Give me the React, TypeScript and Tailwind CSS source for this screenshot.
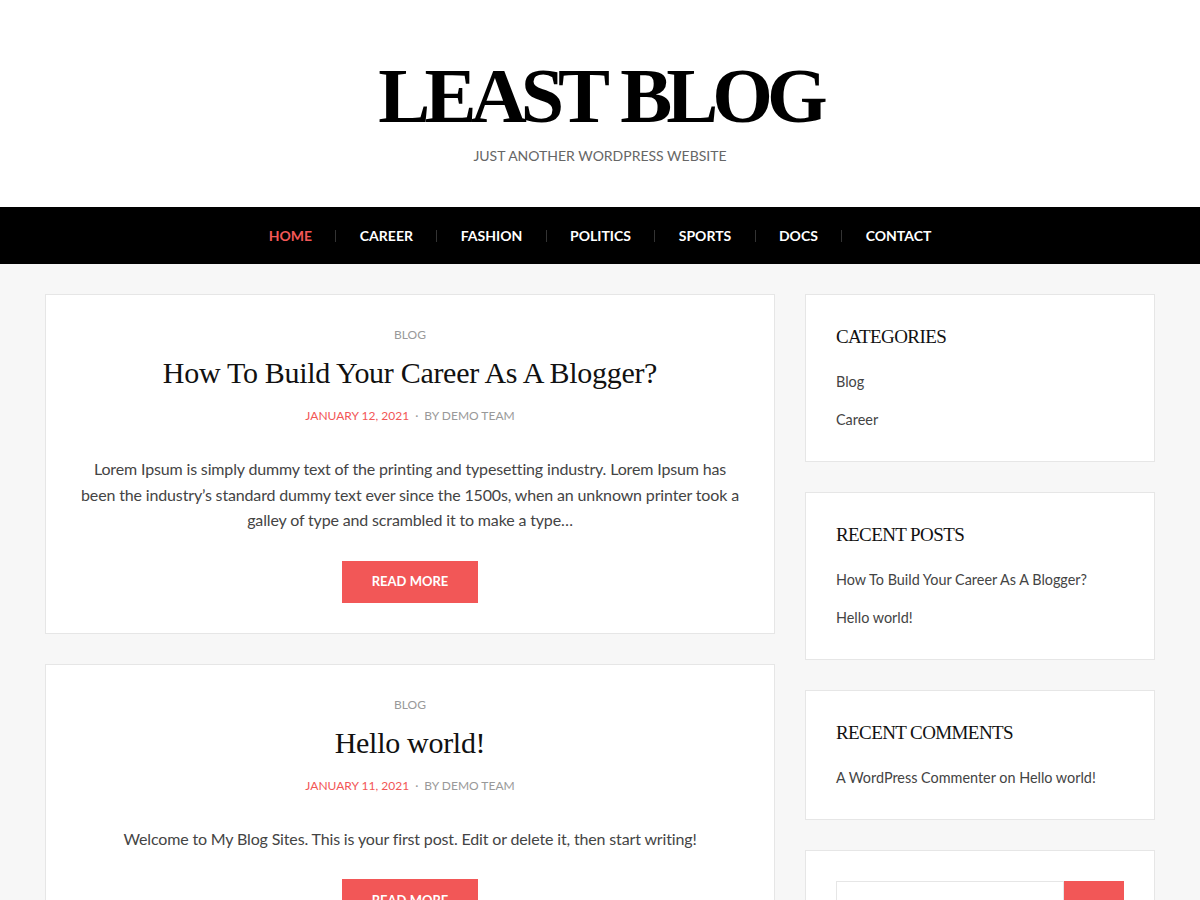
import React from "react";

const serif = { fontFamily: '"Liberation Serif", "Times New Roman", serif' };

const navItems = ["HOME", "CAREER", "FASHION", "POLITICS", "SPORTS", "DOCS", "CONTACT"];

function Post({
  title,
  date,
  children,
}: {
  title: string;
  date: string;
  children: React.ReactNode;
}) {
  return (
    <article className="bg-white border border-[#e6e6e6] px-[35px] pt-[31px] pb-[30px] flex flex-col items-center text-center">
      <a className="text-[12px] leading-[18px] text-[#999] uppercase">Blog</a>
      <h2 className="mt-[9px] text-[30px] leading-[39px] text-[#111] tracking-[-0.3px]" style={serif}>
        {title}
      </h2>
      <div className="mt-[15px] text-[12px] leading-[18px] uppercase text-[#999]">
        <span className="text-[#f25656]">{date}</span>
        <span className="mx-[6px]">·</span>
        <span>By Demo Team</span>
      </div>
      <p className="mt-[31px] text-[16px] leading-[25.6px] text-[#444] tracking-[-0.15px]">{children}</p>
      <button className="mt-[28px] w-[136px] h-[42px] bg-[#f25757] text-white text-[13px] font-bold uppercase">
        Read More
      </button>
    </article>
  );
}

function Widget({ title, children }: { title: string; children: React.ReactNode }) {
  return (
    <section className="bg-white border border-[#e6e6e6] px-[30px] pt-[30px] pb-[22px]">
      <h3 className="text-[19px] leading-[24px] text-[#111] uppercase tracking-[-0.6px]" style={serif}>
        {title}
      </h3>
      <ul className="mt-[14px]">{children}</ul>
    </section>
  );
}

function Item({ children }: { children: React.ReactNode }) {
  return <li className="py-[8px] text-[14.4px] leading-[22px] text-[#444]">{children}</li>;
}

export default function App() {
  return (
    <div className="min-h-[900px] bg-[#f7f7f7]" style={{ fontFamily: 'Lato, "Open Sans", sans-serif' }}>
      <header className="bg-white h-[207px] flex flex-col items-center">
        <h1
          className="mt-[52px] text-[78px] leading-[88px] font-bold text-black tracking-[-6px] [word-spacing:4px]"
          style={serif}
        >
          LEAST BLOG
        </h1>
        <p className="mt-[6px] text-[14px] leading-[20px] text-[#666] uppercase">Just another WordPress website</p>
      </header>
      <nav className="bg-black h-[57px] flex items-center justify-center">
        {navItems.map((item, i) => (
          <React.Fragment key={item}>
            {i > 0 && <span className="w-px h-[12px] bg-[#333]" />}
            <a
              className={`px-[23.4px] text-[14px] font-bold leading-[20px] ${
                i === 0 ? "text-[#f25757]" : "text-white"
              }`}
            >
              {item}
            </a>
          </React.Fragment>
        ))}
      </nav>
      <main className="w-[1110px] mx-auto pt-[30px] flex gap-[30px] items-start">
        <div className="w-[730px] flex flex-col gap-[30px]">
          <Post title="How To Build Your Career As A Blogger?" date="January 12, 2021">
            Lorem Ipsum is simply dummy text of the printing and typesetting industry. Lorem Ipsum has been the
            industry’s standard dummy text ever since the 1500s, when an unknown printer took a galley of type and
            scrambled it to make a type…
          </Post>
          <Post title="Hello world!" date="January 11, 2021">
            Welcome to My Blog Sites. This is your first post. Edit or delete it, then start writing!
          </Post>
        </div>
        <aside className="w-[350px] flex flex-col gap-[30px]">
          <Widget title="Categories">
            <Item>Blog</Item>
            <Item>Career</Item>
          </Widget>
          <Widget title="Recent Posts">
            <Item>How To Build Your Career As A Blogger?</Item>
            <Item>Hello world!</Item>
          </Widget>
          <Widget title="Recent Comments">
            <Item>A WordPress Commenter on Hello world!</Item>
          </Widget>
          <section className="bg-white border border-[#e6e6e6] px-[30px] py-[30px]">
            <form className="flex">
              <input className="w-[228px] h-[44px] border border-[#e6e6e6] px-3 text-[14px] outline-none" />
              <button type="button" className="w-[60px] h-[44px] bg-[#f25757]" />
            </form>
          </section>
        </aside>
      </main>
    </div>
  );
}
